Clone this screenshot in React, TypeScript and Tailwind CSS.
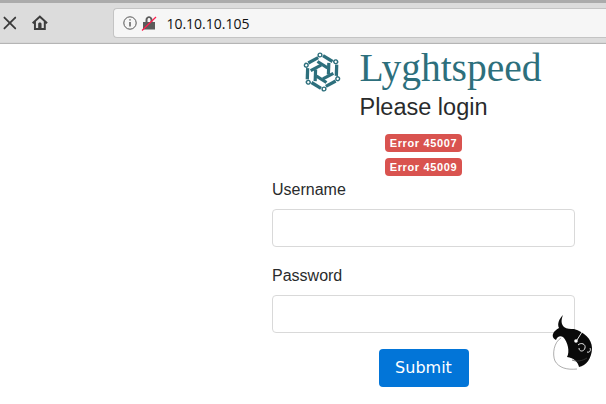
import React from "react";
import { X } from "lucide-react";

function LogoMark() {
  // six rotated circuit arms
  const arms = [0, 60, 120, 180, 240, 300];
  return (
    <svg width="40" height="40" viewBox="0 0 40 40" fill="none" stroke="#2d6f7c" className="mt-[5px]">
      {arms.map((a) => (
        <g key={a} transform={`rotate(${a} 20 20)`}>
          <path d="M21 3.600 L30.500 9.500" strokeWidth="3.300" />
          <path d="M15.500 9.500 L25.500 15.800" strokeWidth="3.200" />
          <circle cx="18" cy="3" r="1.900" strokeWidth="1.400" fill="#fff" />
        </g>
      ))}
    </svg>
  );
}

function Whale() {
  return (
    <svg width="42" height="58" viewBox="0 0 42 58" className="absolute left-[552px] top-[314px]">
      <path d="M9 24 C2 28 0 40 3 47 C7 54 15 56 25 55" fill="#fff" stroke="#777" strokeWidth="0.6" />
      <path d="M11 1 C9 6 9 10 12 13 C15 15 18 15 22 15 C32 18 40 25 40 34 C40 44 34 52 27 53 C26 48 22 44 15 43 C18 38 16 28 11 23 C8 21 5 23 4 26 C2 25 0 23 1 20 C2 17 4 16 7 14 C5 10 7 5 11 1 Z" fill="#0a0a0a" />
      <path d="M26 31 C29 28 34 30 33 34 C32 38 27 38 27 34 M30 18 L25 26 M35 38 C38 39 39 36 38 34" fill="none" stroke="#fff" strokeWidth="0.9" />
      <circle cx="24" cy="27" r="1.800" fill="#fff" />
      <path d="M20 46 C25 48 30 47 35 44" fill="none" stroke="#444" strokeWidth="0.7" />
    </svg>
  );
}

export default function App() {
  return (
    <div className="relative h-[404px] w-[606px] overflow-hidden bg-white font-['Liberation_Sans',sans-serif] text-[#292b2c]">
      {/* browser toolbar */}
      <div className="flex h-[44px] items-center border-t-[3px] border-b border-t-[#ababab] border-b-[#b5b5b5] bg-[#dcdcdc] shadow-[inset_0_-1px_0_#d6d6d6]">
        <X size={22} strokeWidth={2} className="ml-[-1px] text-[#3b3b3b]" />
        <svg width="18" height="18" viewBox="0 0 18 18" className="ml-[10px]" fill="#3d3d3d">
          <path fillRule="evenodd" d="M9 1.200 L17 8.600 L15.600 10 L15 9.400 V16 H3 V9.400 L2.400 10 L1 8.600 Z M9 3.800 L5 7.600 V14.200 H7.300 V10 C7.300 8.900 8 8.400 9 8.400 C10 8.400 10.700 8.900 10.700 10 V14.200 H13 V7.600 Z" />
        </svg>
        <div className="ml-[65px] flex h-[30px] w-[500px] items-center rounded-l-[4px] border border-r-0 border-[#c4c4c4] bg-[#f6f6f6] pl-[9px]">
          <svg width="14" height="14" viewBox="0 0 14 14" fill="none" stroke="#555">
            <circle cx="7" cy="7" r="6.200" strokeWidth="1" />
            <path d="M7 6 V10.500 M7 3.200 V4.600" strokeWidth="1.400" />
          </svg>
          <svg width="16" height="16" viewBox="0 0 16 16" className="ml-[4px]">
            <path d="M4.500 7 V5 C4.500 2.400 6.500 1.200 8 1.200 C9.500 1.200 11.500 2.400 11.500 5 V7 H14 V14.500 H2 V7 Z M6.500 7 H9.500 V5 C9.500 3.600 8.700 3 8 3 C7.300 3 6.500 3.600 6.500 5 Z" fill="#5c5c5c" fillRule="evenodd" />
            <path d="M1 15.500 L15 2" stroke="#ff1f4f" strokeWidth="1.300" />
          </svg>
          <span className="ml-[9px] font-['Open_Sans',sans-serif] text-[14px] text-[#111]">10.10.10.105</span>
        </div>
      </div>

      {/* login form */}
      <div className="ml-[272px] w-[303px]">
        <div className="mt-[5px] flex h-[41px] items-center justify-center pr-[3px]">
          <LogoMark />
          <span className="ml-[17px] mb-[2px] font-['Liberation_Serif',serif] text-[39.500px] leading-none text-[#2d6f7c]">
            Lyghtspeed
          </span>
        </div>
        <h1 className="mt-[3px] text-center text-[23.500px] leading-[29px]">Please login</h1>
        <div className="mt-[12px] flex flex-col items-center gap-[6px]">
          <span className="rounded-[4px] bg-[#d9534f] px-[5px] text-[11px] leading-[18px] font-bold tracking-[0.65px] text-white">
            Error 45007
          </span>
          <span className="rounded-[4px] bg-[#d9534f] px-[5px] text-[11px] leading-[18px] font-bold tracking-[0.65px] text-white">
            Error 45009
          </span>
        </div>
        <label className="mt-[2px] block text-[16px] leading-[24px]">Username</label>
        <input className="mt-[7px] block h-[38px] w-full rounded-[4px] border border-[#d9d9d9] bg-white" />
        <label className="mt-[17px] block text-[16px] leading-[24px]">Password</label>
        <input type="password" className="mt-[7px] block h-[38px] w-full rounded-[4px] border border-[#d9d9d9] bg-white" />
        <div className="mt-[16px] flex justify-center">
          <button className="h-[38px] w-[90px] rounded-[4px] bg-[#0275d8] font-['DejaVu_Sans',sans-serif] text-[16px] text-white">
            Submit
          </button>
        </div>
      </div>

      <Whale />
    </div>
  );
}
